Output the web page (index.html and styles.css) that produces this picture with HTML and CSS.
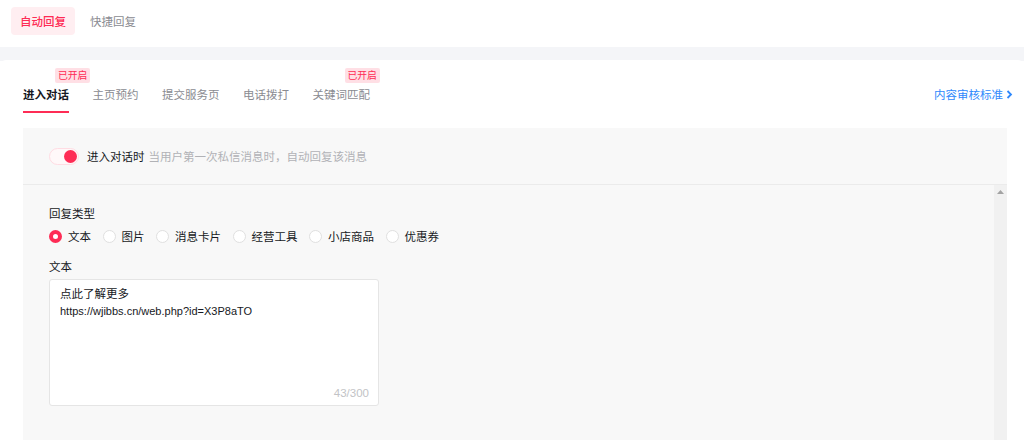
FILE: index.html
```html
<!DOCTYPE html>
<html lang="zh-CN">
<head>
    <meta charset="UTF-8">
    <meta name="viewport" content="width=device-width, initial-scale=1.0">
    <title>自动回复</title>
    <link rel="stylesheet" href="styles.css">
</head>
<body>
    <div class="top-nav">
        <div class="nav-item active">自动回复</div>
        <div class="nav-item">快捷回复</div>
    </div>
    <div class="band"></div>

    <div class="card">
        <div class="tabs-row">
            <div class="tabs">
                <div class="tab active">进入对话<span class="badge">已开启</span></div>
                <div class="tab">主页预约</div>
                <div class="tab">提交服务页</div>
                <div class="tab">电话拨打</div>
                <div class="tab">关键词匹配<span class="badge">已开启</span></div>
            </div>
            <a class="rule-link">内容审核标准
                <svg width="7" height="9" viewBox="0 0 7 9"><path d="M1.5 1 L5 4.5 L1.5 8" fill="none" stroke="#2f89fc" stroke-width="1.8"/></svg>
            </a>
        </div>

        <div class="panel">
            <div class="switch-row">
                <div class="switch"><div class="knob"></div></div>
                <span class="switch-label">进入对话时</span>
                <span class="switch-desc">当用户第一次私信消息时，自动回复该消息</span>
            </div>
            <div class="panel-body">
                <div class="form">
                    <div class="field-label">回复类型</div>
                    <div class="radios">
                        <label class="radio checked"><span class="dot"></span>文本</label>
                        <label class="radio"><span class="dot"></span>图片</label>
                        <label class="radio"><span class="dot"></span>消息卡片</label>
                        <label class="radio"><span class="dot"></span>经营工具</label>
                        <label class="radio"><span class="dot"></span>小店商品</label>
                        <label class="radio"><span class="dot"></span>优惠券</label>
                    </div>
                    <div class="field-label text-label">文本</div>
                    <div class="textbox">
                        <div class="text-content">点此了解更多<br><span class="latin">https://wjibbs.cn/web.php?id=X3P8aTO</span></div>
                        <div class="counter">43/300</div>
                    </div>
                </div>
                <div class="scrollbar">
                    <svg width="7" height="4" viewBox="0 0 7 4"><path d="M0 4 L3.5 0 L7 4 Z" fill="#a3a3a3"/></svg>
                </div>
            </div>
        </div>
    </div>
</body>
</html>
```

FILE: styles.css
```css
body {
    margin: 0;
    height: 440px;
    overflow: hidden;
    background: #ffffff;
    font-family: "Noto Sans CJK SC", "Noto Sans", sans-serif;
    font-size: 11.5px;
    color: #161823;
}

.top-nav {
    height: 47px;
    display: flex;
    align-items: center;
    padding-left: 11px;
    box-sizing: border-box;
}

.nav-item {
    height: 28px;
    line-height: 28px;
    padding: 0 9px;
    border-radius: 4px;
    color: #8a8b91;
    margin-right: 6px;
    margin-top: -5px;
}

.nav-item.active {
    background: #ffeef1;
    color: #fe2c55;
    font-weight: 500;
}

.band {
    height: 14px;
    background: #f4f5f8;
}

.card {
    background: #ffffff;
    border-radius: 6px 6px 0 0;
    margin-top: -1px;
    padding: 0 17px 0 23px;
}

.tabs-row {
    height: 68px;
    display: flex;
    justify-content: space-between;
    align-items: flex-start;
}

.tabs {
    display: flex;
    gap: 23.5px;
    padding-top: 25px;
}

.tab {
    position: relative;
    height: 27px;
    color: #8a8b91;
    line-height: 18px;
}

.tab.active {
    color: #161823;
    font-weight: 700;
    border-bottom: 2px solid #fe2c55;
    height: 26px;
}

.badge {
    position: absolute;
    left: 32px;
    top: -17px;
    height: 15px;
    line-height: 15px;
    padding: 0 3px;
    border-radius: 2px;
    background: #ffdfe5;
    color: #fe2c55;
    font-size: 9.8px;
    font-weight: 400;
    white-space: nowrap;
}

.rule-link {
    margin-top: 25px;
    margin-right: -6px;
    color: #2f89fc;
    line-height: 18px;
    display: flex;
    align-items: center;
    gap: 3px;
}

.panel {
    background: #f8f8f8;
    height: 320px;
}

.switch-row {
    height: 57px;
    display: flex;
    align-items: center;
    padding-left: 26px;
    border-bottom: 1px solid #ebebeb;
    box-sizing: border-box;
}

.switch {
    width: 30px;
    height: 17px;
    box-sizing: border-box;
    border: 1px solid #ffdce3;
    border-radius: 9px;
    background: #fff8f9;
    position: relative;
    margin-right: 8px;
}

.knob {
    position: absolute;
    right: 1px;
    top: 1px;
    width: 13px;
    height: 13px;
    border-radius: 50%;
    background: #fe2c55;
}

.switch-label {
    color: #161823;
    margin-right: 4px;
}

.switch-desc {
    color: #b1b2b6;
}

.panel-body {
    display: flex;
    height: 263px;
}

.form {
    flex: 1;
    padding: 19px 0 0 26px;
}

.field-label {
    color: #161823;
    line-height: 18px;
}

.radios {
    display: flex;
    margin-top: 5px;
    height: 18px;
    align-items: center;
}

.radio {
    display: flex;
    align-items: center;
    margin-right: 11.5px;
    color: #161823;
}

.dot {
    width: 13px;
    height: 13px;
    box-sizing: border-box;
    border-radius: 50%;
    border: 1px solid #e0e0e0;
    background: #ffffff;
    margin-right: 6px;
}

.radio.checked .dot {
    border: 4px solid #fe2c55;
}

.text-label {
    margin-top: 12px;
}

.textbox {
    width: 330px;
    height: 127px;
    margin-top: 4px;
    box-sizing: border-box;
    border: 1px solid #e5e5e5;
    border-radius: 3px;
    background: #ffffff;
    position: relative;
    padding: 5px 10px;
}

.text-content {
    line-height: 17px;
    color: #161823;
}

.latin {
    font-family: "Liberation Sans", "Noto Sans CJK SC", sans-serif;
    font-size: 11px;
}

.counter {
    position: absolute;
    right: 9px;
    bottom: 3px;
    color: #c2c3c6;
    line-height: 17px;
    font-family: "Liberation Sans", sans-serif;
}

.scrollbar {
    width: 13px;
    background: #f1f1f1;
    display: flex;
    justify-content: center;
    padding-top: 5px;
    box-sizing: border-box;
}
```
